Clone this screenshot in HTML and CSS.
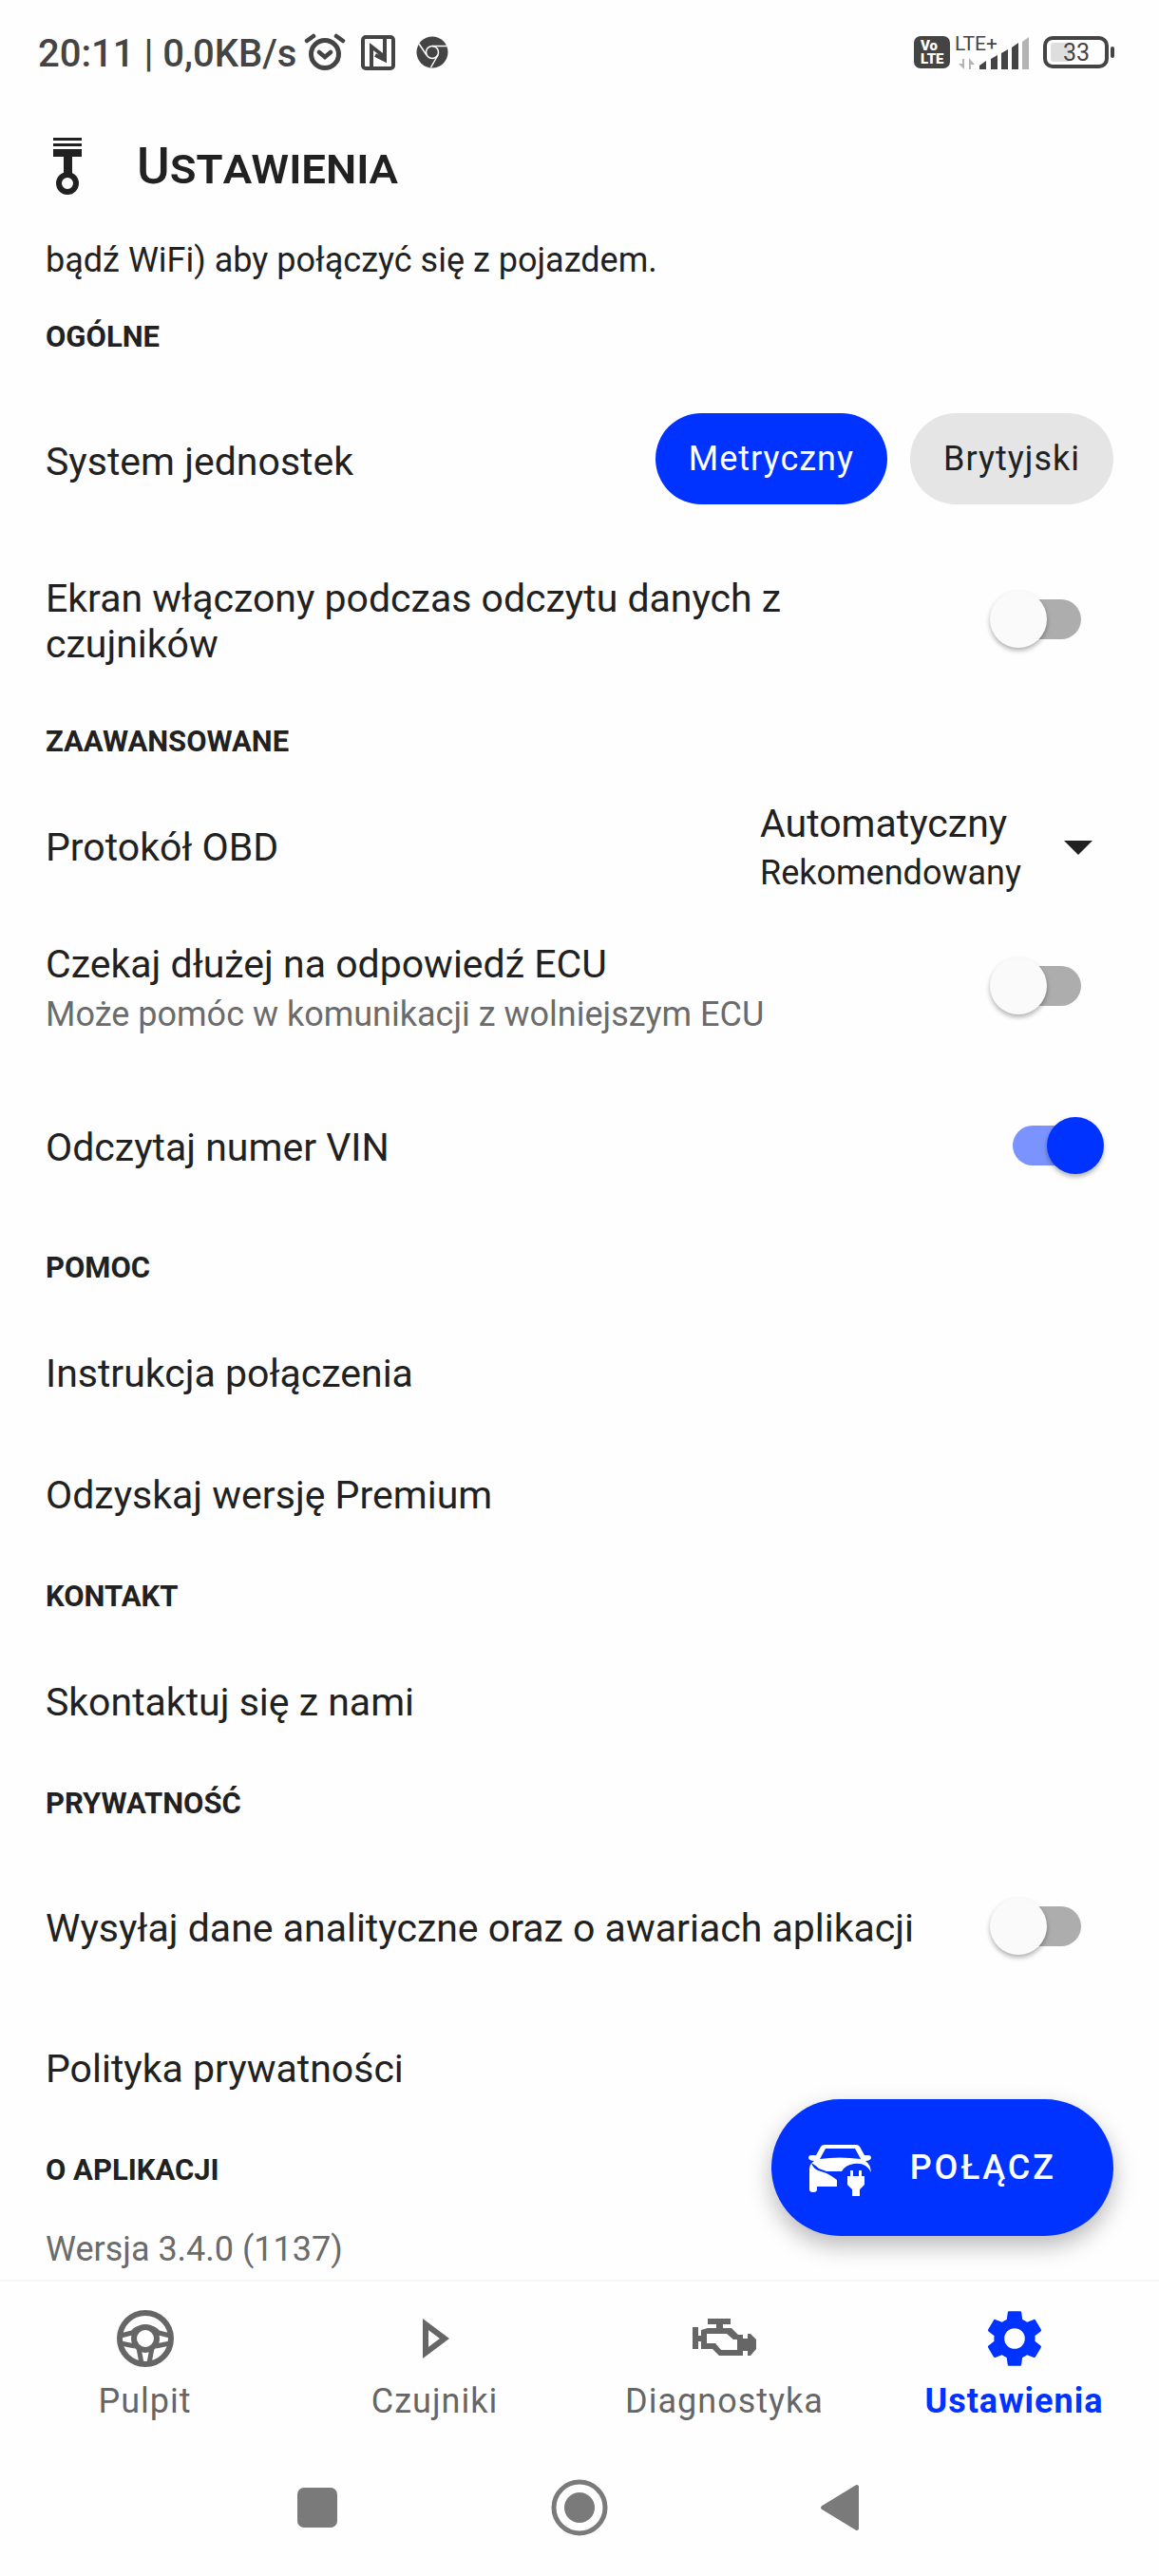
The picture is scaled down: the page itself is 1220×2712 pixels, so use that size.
FILE: index.html
```html
<!DOCTYPE html>
<html lang="pl">
<head>
<meta charset="utf-8">
<meta name="viewport" content="width=device-width">
<title>Ustawienia</title>
<link rel="stylesheet" href="styles.css">
</head>
<body>
<div class="status">
  <span class="status-text">20:11 | 0,0KB/s</span>
  <svg class="status-alarm" width="44" height="40" viewBox="0 0 44 40" fill="none" stroke="#444" stroke-width="5" stroke-linecap="round"><circle cx="22" cy="22" r="14.500"/><path d="M16 20l6 5 6-5M3 8l7-5M41 8l-7-5" stroke-width="4.500"/></svg>
  <svg class="status-nfc" width="36" height="38" viewBox="0 0 36 38" fill="none" stroke="#444" stroke-width="4"><rect x="2" y="3" width="32" height="33" rx="3"/><path d="M11 34V13l14 11M25 5v22L15 22" stroke-width="4"/></svg>
  <svg width="34" height="34" viewBox="0 0 34 34"><circle cx="17" cy="17" r="16.500" fill="#444"/><g fill="none" stroke="#fff" stroke-width="1.500"><circle cx="17" cy="17" r="6.500"/><path d="M17 10.500H32M11 20L3 8M23 20L15.500 33"/></g></svg>
  <span class="status-right">
    <svg width="38" height="34" viewBox="0 0 38 34"><rect width="38" height="34" rx="7" fill="#444"/><text x="7" y="15" class="volte">Vo</text><text x="7" y="29" class="volte">LTE</text></svg>
    <svg width="80" height="48" viewBox="0 -6 80 48"><text x="1" y="16" class="lte">LTE+</text><path fill="#444" d="M27 36v-4l7-5v9zM39 36v-11l7-4v15zM50 36V19l7-4v21zM61 36V13l7-5v28z"/><path fill="#b4b4b4" d="M72 36V7l7-5v34zM11 25v11l-6-6h4v-5zM16 36V24l6 7h-4v5z"/></svg>
    <svg class="battery" width="76" height="34" viewBox="0 0 76 34"><rect x="8" y="7" width="21" height="20" rx="3" fill="#dedede"/><rect x="2" y="2" width="65" height="30" rx="8" fill="none" stroke="#444" stroke-width="4"/><rect x="71" y="11" width="4" height="12" rx="2" fill="#444"/><text x="35" y="26" text-anchor="middle" class="charge">33</text></svg>
  </span>
</div>
<header class="appbar">
  <svg width="30" height="60" viewBox="0 0 30 60" fill="#212121"><path d="M0 0h30v3H0zM0 6h30v3H0zM0 12h30v8H0zM11 20h9v19h-9z"/><circle cx="15" cy="48" r="9" fill="none" stroke="#212121" stroke-width="6"/></svg>
  <h1 class="title">Ustawienia</h1>
</header>
<main class="settings">
  <p class="intro">bądź WiFi) aby połączyć się z pojazdem.</p>

  <h2 class="section">OGÓLNE</h2>
  <div class="row tall">
    <span class="label">System jednostek</span>
    <div class="chips">
      <button type="button" class="chip chip-on" aria-pressed="true">Metryczny</button>
      <button type="button" class="chip" aria-pressed="false">Brytyjski</button>
    </div>
  </div>
  <label class="row tall">
    <span class="label">Ekran włączony podczas odczytu danych z czujników</span>
    <input type="checkbox" role="switch" class="switch">
  </label>

  <h2 class="section">ZAAWANSOWANE</h2>
  <div class="row">
    <label class="label" for="protocol">Protokół OBD</label>
    <div class="dropdown">
      <select id="protocol" class="select"><option>Automatyczny</option></select>
      <span class="hint-dark">Rekomendowany</span>
    </div>
  </div>
  <label class="row tall">
    <span class="label two-line">Czekaj dłużej na odpowiedź ECU<span class="hint">Może pomóc w komunikacji z wolniejszym ECU</span></span>
    <input type="checkbox" role="switch" class="switch">
  </label>
  <label class="row tall">
    <span class="label">Odczytaj numer VIN</span>
    <input type="checkbox" role="switch" class="switch" checked>
  </label>

  <h2 class="section">POMOC</h2>
  <a class="row" href="#instrukcja">Instrukcja połączenia</a>
  <a class="row" href="#premium">Odzyskaj wersję Premium</a>

  <h2 class="section">KONTAKT</h2>
  <a class="row" href="#kontakt">Skontaktuj się z nami</a>

  <h2 class="section">PRYWATNOŚĆ</h2>
  <label class="row tall">
    <span class="label">Wysyłaj dane analityczne oraz o awariach aplikacji</span>
    <input type="checkbox" role="switch" class="switch">
  </label>
  <a class="row" href="#polityka">Polityka prywatności</a>

  <h2 class="section">O APLIKACJI</h2>
  <p class="version">Wersja 3.4.0 (1137)</p>

  <button type="button" class="connect">
    <svg width="68" height="60" viewBox="0 -2 68 60" fill="#fff"><path fill-rule="evenodd" d="M18 4h33q3 0 4 2l5 9h4q3 0 3 3-1 3-6 3 5 3 6 12-3-5-6-7-5-3-12-2-9 1-13 8H20l-8-3q-3-3-8-6 2 6 7 8l9 3q6 3 11 7v7H10v3q0 3-4 3t-4-3V30q0-6 5-9-5 0-6-3 0-3 3-3h5l5-9q1-2 4-2zM19 8l-6 11q20-3 43 0L50 8z"/><path d="M45 31h3v6h6v-6h3v6h3v9l-5 5v7h-8v-7l-5-5v-9h3z"/></svg>
    <span>POŁĄCZ</span>
  </button>
</main>
<nav class="tabs">
  <a class="tab" href="#pulpit">
    <svg width="60" height="60" viewBox="0 0 60 60" fill="none" stroke="#666" stroke-width="6"><circle cx="30" cy="30" r="27"/><circle cx="30" cy="30" r="12"/><path d="M4 27l12-3q5-6 14-6t14 6l12 3M4 35l15 3M56 35l-15 3M23 40l3 16M37 40l-3 16" stroke-width="5"/></svg>
    Pulpit
  </a>
  <a class="tab" href="#czujniki">
    <svg width="60" height="60" viewBox="0 0 60 60" fill="none" stroke="#666" stroke-width="6"><path d="M20 15v30l20-15z"/></svg>
    Czujniki
  </a>
  <a class="tab" href="#diagnostyka">
    <svg width="68" height="60" viewBox="0 0 68 60" fill="#666"><path fill-rule="evenodd" d="M16 9h24v6h-8v4h9l7 7h5v22H28l-7-7H9v-8H6v8H0V18h6v9h3v-6l7-2h9v-4h-9zM15 25v10h9l6 7h17V31h-4l-7-6z"/><path d="M53 30h5v-5h3l6 6v10l-6 7h-3v-5h-5z"/></svg>
    Diagnostyka
  </a>
  <a class="tab tab-on" href="#ustawienia" aria-current="page">
    <svg width="72" height="72" viewBox="0 0 24 24" fill="#0033ff"><path d="M19.140 12.940c.040-.300.060-.610.060-.940 0-.320-.020-.640-.070-.940l2.030-1.580a.490.490 0 0 0 .120-.610l-1.920-3.320a.488.488 0 0 0-.590-.220l-2.390.960c-.500-.380-1.030-.700-1.620-.940L14.400 2.810a.484.484 0 0 0-.480-.410h-3.840a.484.484 0 0 0-.480.410L9.240 5.350c-.590.240-1.130.570-1.620.940l-2.390-.960a.488.488 0 0 0-.590.220L2.720 8.870a.480.480 0 0 0 .120.610l2.030 1.580c-.050.300-.090.630-.090.940s.020.640.070.940l-2.030 1.580a.490.490 0 0 0-.120.610l1.920 3.320c.120.220.370.290.590.220l2.390-.960c.500.380 1.030.700 1.620.940l.360 2.540c.050.240.240.410.480.410h3.840c.240 0 .440-.170.470-.410l.360-2.540c.590-.240 1.130-.560 1.620-.940l2.390.960c.220.080.470 0 .590-.220l1.920-3.320a.480.480 0 0 0-.120-.610zM12 15.600A3.600 3.600 0 1 1 12 8.400a3.600 3.600 0 0 1 0 7.200z"/></svg>
    Ustawienia
  </a>
</nav>
<div class="system">
  <button type="button" class="key" aria-label="Ostatnie"><svg width="60" height="60" viewBox="0 0 60 60"><rect x="9" y="9" width="42" height="42" rx="7" fill="#7a7a7a"/></svg></button>
  <button type="button" class="key" aria-label="Ekran główny"><svg width="60" height="60" viewBox="0 0 60 60"><circle cx="30" cy="30" r="27" fill="none" stroke="#7a7a7a" stroke-width="5"/><circle cx="30" cy="30" r="16" fill="#7a7a7a"/></svg></button>
  <button type="button" class="key" aria-label="Wstecz"><svg width="60" height="60" viewBox="0 0 60 60"><path d="M10 30L46 8v44z" fill="#7a7a7a" stroke="#7a7a7a" stroke-width="4" stroke-linejoin="round"/></svg></button>
</div>
</body>
</html>
```
FILE: styles.css
```css
* { box-sizing: border-box; }

body {
  margin: 0;
  min-height: 100vh;
  display: flex;
  flex-direction: column;
  background: #fefefe;
  color: #212121;
  font-family: Roboto, "Liberation Sans", sans-serif;
  font-size: 41px;
  line-height: 48px;
}

h1, h2, p { margin: 0; }
a { color: inherit; text-decoration: none; }
svg { display: block; flex: none; }
button { border: 0; font: inherit; color: inherit; cursor: pointer; }

/* Status bar */
.status {
  display: flex;
  align-items: center;
  height: 110px;
  padding: 0 46px 0 40px;
  color: #444;
}
.status-text { padding-top: 4px; font-size: 40px; font-weight: 500; }
.status-alarm { margin-left: 8px; }
.status-nfc { margin: 0 22px 0 16px; }
.status-right { display: flex; align-items: center; gap: 4px; margin-left: auto; }
.battery { margin-left: 10px; }
.volte { font-size: 15px; font-weight: 900; fill: #fff; }
.lte { font-size: 21px; fill: #444; }
.charge { font-size: 25px; fill: #444; }

/* App bar */
.appbar {
  display: flex;
  align-items: center;
  gap: 58px;
  height: 130px;
  padding: 0 56px;
}
.title { font-size: 53px; font-weight: 500; font-variant: small-caps; }

/* Settings list */
.settings {
  position: relative;
  flex: 1;
  padding: 10px 48px 8px;
}
.intro, .version, .hint, .hint-dark { font-size: 36px; }
.intro { padding-bottom: 12px; }
.section {
  padding: 27px 0;
  font-size: 31px;
  line-height: 36px;
  font-weight: 700;
}
.row {
  display: flex;
  align-items: center;
  justify-content: space-between;
  gap: 48px;
  min-height: 128px;
  padding-top: 3px;
}
.tall { min-height: 168px; }
.label { max-width: 920px; }
.two-line { padding-top: 4px; }
.hint { display: block; padding-top: 5px; color: #6b6b6b; }
.version { padding: 14px 0 0; color: #6b6b6b; }

.chips { display: flex; gap: 24px; padding-bottom: 6px; }
.chip {
  height: 96px;
  padding: 0 35px;
  border-radius: 48px;
  background: #e5e5e5;
  font-size: 36px;
  letter-spacing: 1px;
}
.chip-on { background: #0033ff; color: #fff; }

.switch {
  appearance: none;
  flex: none;
  position: relative;
  display: flex;
  align-items: center;
  width: 120px;
  height: 60px;
  margin: 0 10px 4px 0;
}
.switch::before {
  content: "";
  width: 72px;
  height: 42px;
  margin: 0 auto;
  border-radius: 21px;
  background: #adadad;
}
.switch::after {
  content: "";
  position: absolute;
  left: 0;
  width: 60px;
  height: 60px;
  border-radius: 50%;
  background: #fafafa;
  box-shadow: 0 3px 5px rgba(0, 0, 0, 0.3);
}
.switch:checked::before { background: #7a93ff; }
.switch:checked::after { left: auto; right: 0; background: #0033ff; }

.dropdown { display: grid; width: 372px; padding-top: 3px; }
.select {
  appearance: none;
  grid-area: 1 / 1 / 3 / 2;
  border: 0;
  padding: 0 48px 52px 0;
  background: url("data:image/svg+xml,%3Csvg xmlns='http://www.w3.org/2000/svg' width='30' height='15'%3E%3Cpath d='M0 0h30L15 15z' fill='%23212121'/%3E%3C/svg%3E") no-repeat 320px 42px;
  color: inherit;
  font: inherit;
}
.hint-dark { grid-area: 2 / 1; pointer-events: none; }

.connect {
  position: absolute;
  right: 48px;
  bottom: 46px;
  display: flex;
  align-items: center;
  gap: 40px;
  height: 144px;
  padding: 0 60px 0 38px;
  border-radius: 72px;
  background: #0033ff;
  color: #fff;
  font-size: 36px;
  font-weight: 500;
  letter-spacing: 3px;
  box-shadow: 0 10px 24px rgba(0, 0, 0, 0.28);
}

/* Bottom navigation */
.tabs {
  display: grid;
  grid-template-columns: repeat(4, 1fr);
  height: 168px;
  border-top: 2px solid #f7f7f7;
  color: #666;
  font-size: 36px;
  letter-spacing: 1px;
}
.tab {
  display: grid;
  grid-template-rows: 76px 48px;
  row-gap: 4px;
  padding-top: 22px;
  align-content: start;
  place-items: center;
}
.tab-on { color: #0033ff; font-weight: 700; }

/* System keys */
.system {
  display: flex;
  justify-content: center;
  align-items: center;
  gap: 216px;
  height: 144px;
}
.key { padding: 0; background: none; }
```
